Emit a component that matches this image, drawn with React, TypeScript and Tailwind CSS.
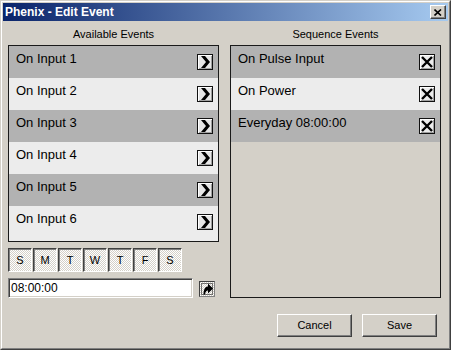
import React from "react";

const available = ["On Input 1", "On Input 2", "On Input 3", "On Input 4", "On Input 5", "On Input 6"];
const sequence = ["On Pulse Input", "On Power", "Everyday 08:00:00"];
const days = ["S", "M", "T", "W", "T", "F", "S"];

const hatch =
  "bg-[repeating-conic-gradient(#ffffff_0_25%,#d4d0c8_0_50%)] bg-[length:2px_2px]";

const AddButton = () => (
  <div className="w-[16px] h-[16px] border border-[#111] bg-[#e6e6e6] shadow-[inset_1px_1px_0_#fff,inset_-1px_-1px_0_#a0a0a0] flex items-center justify-center">
    <svg width="14" height="14" viewBox="0 0 14 14">
      <polygon points="3,1 7,1 12,7 7,13 3,13 8,7" fill="#000" />
    </svg>
  </div>
);

const RemoveButton = () => (
  <div className="w-[16px] h-[16px] border border-[#111] bg-[#ececec] shadow-[inset_1px_1px_0_#fff,inset_-1px_-1px_0_#a0a0a0] flex items-center justify-center">
    <svg width="14" height="14" viewBox="0 0 14 14">
      <path d="M2 2 L12 12 M12 2 L2 12" stroke="#000" strokeWidth="2.4" />
    </svg>
  </div>
);

const EventRow = ({ label, dark, remove }: any) => (
  <div className={`h-[32px] flex justify-between items-start pl-[7px] pr-[5px] ${dark ? "bg-[#b2b2b2]" : "bg-[#ececec]"}`}>
    <span className="text-[13px] leading-[16px] pt-[5px] text-black">{label}</span>
    <div className="mt-[8px]">{remove ? <RemoveButton /> : <AddButton />}</div>
  </div>
);

export default function App() {
  return (
    <div
      className="w-[451px] h-[350px] bg-[#d4d0c8] border border-t-[#d4d0c8] border-l-[#d4d0c8] border-r-[#404040] border-b-[#404040]"
      style={{ fontFamily: '"Liberation Sans", Arial, sans-serif' }}
    >
      <div className="h-full border border-t-white border-l-white border-r-[#808080] border-b-[#808080] p-px flex flex-col">
        {/* title bar */}
        <div className="h-[18px] flex items-center justify-between pl-[2px] pr-[2px] bg-[linear-gradient(to_right,#0a246a,#a6caf0)]">
          <span className="text-white font-bold text-[12px] leading-[14px]">Phenix - Edit Event</span>
          <div className="w-[16px] h-[14px] bg-[#d4d0c8] border border-t-white border-l-white border-r-[#404040] border-b-[#404040] shadow-[inset_-1px_-1px_0_#808080] flex items-center justify-center">
            <svg width="8" height="7" viewBox="0 0 8 7">
              <path d="M0.5 0.5 L7 6.5 M7 0.5 L0.5 6.5" stroke="#000" strokeWidth="1.6" />
            </svg>
          </div>
        </div>

        <div className="flex-1 flex flex-col pl-[5px] pr-[7px]">
          <div className="flex gap-[11px]">
            {/* left column */}
            <div className="w-[211px] flex flex-col">
              <div className="h-[24px] pt-[6px] text-center text-[11px] leading-[14px] text-black">Available Events</div>
              <div className="h-[197px] border border-[#1a1a1a] bg-[#ececec]">
                {available.map((a, i) => (
                  <EventRow key={a} label={a} dark={i % 2 === 0} />
                ))}
              </div>
              <div className="mt-[6px] flex gap-px">
                {days.map((d, i) => (
                  <div
                    key={i}
                    className={`w-[24px] h-[24px] flex items-center justify-center text-[11px] text-black border border-t-[#404040] border-l-[#404040] border-r-white border-b-white shadow-[inset_1px_1px_0_#808080] ${hatch}`}
                  >
                    {d}
                  </div>
                ))}
              </div>
              <div className="mt-[6px] flex items-start">
                <div className="w-[185px] h-[20px] bg-white border border-t-[#808080] border-l-[#808080] border-b-white border-r-white shadow-[inset_1px_1px_0_#404040,inset_-1px_-1px_0_#d4d0c8] pl-[2px] text-[12px] leading-[18px] text-black">
                  08:00:00
                </div>
                <div className={`ml-[6px] mt-[3px] w-[16px] h-[16px] border border-t-[#404040] border-l-[#404040] border-r-[#808080] border-b-[#808080] flex items-center justify-center ${hatch}`}>
                  <svg width="14" height="14" viewBox="0 0 14 14">
                    <rect x="1.5" y="1.5" width="11" height="11" fill="none" stroke="#000" strokeWidth="1" strokeDasharray="1 1" />
                    <path d="M3.5 12.5 C3.5 7 5.5 4.5 8 4.5 L8 1.5 L13 6.5 L8 11.5 L8 8.5 C6.5 8.5 5.5 9.5 5 12.5 Z" fill="#000" />
                  </svg>
                </div>
              </div>
            </div>

            {/* right column */}
            <div className="w-[211px] flex flex-col">
              <div className="h-[24px] pt-[6px] text-center text-[11px] leading-[14px] text-black">Sequence Events</div>
              <div className="h-[253px] border border-[#1a1a1a] bg-[#d4d0c8]">
                {sequence.map((s, i) => (
                  <EventRow key={s} label={s} dark={i % 2 === 0} remove />
                ))}
              </div>
            </div>
          </div>

          <div className="mt-[16px] mr-[4px] flex justify-end gap-[10px]">
            {["Cancel", "Save"].map((b) => (
              <div
                key={b}
                className="w-[75px] h-[23px] flex items-center justify-center text-[11px] text-black bg-[#d4d0c8] border border-t-white border-l-white border-r-[#404040] border-b-[#404040] shadow-[inset_-1px_-1px_0_#808080]"
              >
                {b}
              </div>
            ))}
          </div>
        </div>
      </div>
    </div>
  );
}
